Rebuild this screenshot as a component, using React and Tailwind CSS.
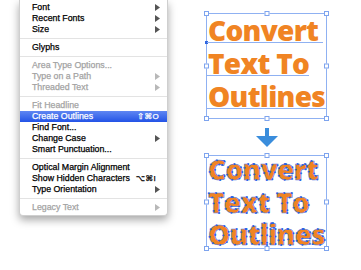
import React from 'react';

const menu = [
  { label: 'Font', arrow: true },
  { label: 'Recent Fonts', arrow: true },
  { label: 'Size', arrow: true },
  'sep',
  { label: 'Glyphs' },
  'sep',
  { label: 'Area Type Options...', off: true },
  { label: 'Type on a Path', arrow: true, off: true },
  { label: 'Threaded Text', arrow: true, off: true },
  'sep',
  { label: 'Fit Headline', off: true },
  { label: 'Create Outlines', key: '⇧⌘O', active: true },
  { label: 'Find Font...' },
  { label: 'Change Case', arrow: true },
  { label: 'Smart Punctuation...' },
  'sep',
  { label: 'Optical Margin Alignment' },
  { label: 'Show Hidden Characters', key: '⌥⌘I', keyPad: true },
  { label: 'Type Orientation', arrow: true },
  'sep',
  { label: 'Legacy Text', arrow: true, off: true },
];

const Caret = ({ off }) => (
  <svg width="5" height="7" viewBox="0 0 5 7" className="ml-auto shrink-0">
    <polygon points="0,0 5,3.5 0,7" fill={off ? '#b8b8b8' : '#555'} />
  </svg>
);

const Handles = () => {
  const spots = [
    'left-[-3px] top-[-3px]',
    'left-1/2 -translate-x-1/2 top-[-3px]',
    'right-[-3px] top-[-3px]',
    'left-[-3px] top-1/2 -translate-y-1/2',
    'right-[-3px] top-1/2 -translate-y-1/2',
    'left-[-3px] bottom-[-3px]',
    'left-1/2 -translate-x-1/2 bottom-[-3px]',
    'right-[-3px] bottom-[-3px]',
  ];
  return spots.map((s) => (
    <span key={s} className={`absolute ${s} w-[5px] h-[5px] bg-white border border-[#7ea4ee]`} />
  ));
};

const TextLine = ({ children, lineWidth }) => (
  <div className="relative h-[33px] leading-[33px] whitespace-nowrap">
    {children}
    <span
      className="absolute left-[-1px] top-[28px] h-px bg-[#8fb1f2]"
      style={{ width: lineWidth }}
    />
  </div>
);

const App = () => {
  return (
    <div className="w-[361px] h-[270px] bg-white overflow-hidden flex items-start font-['Liberation_Sans','DejaVu_Sans',sans-serif]">
      {/* Type menu */}
      <div className="ml-[19px] w-[149px] pt-[2px] pb-[2px] bg-white border-x border-b border-[#cfcfcf] rounded-b-[4px] shadow-[0_4px_9px_rgba(0,0,0,0.35)]">
        {menu.map((item, i) =>
          item === 'sep' ? (
            <div key={i} className="h-[7px] flex items-center">
              <div className="w-full h-px bg-[#e3e3e3]" />
            </div>
          ) : (
            <div
              key={i}
              className={`h-[11px] flex items-center pl-[12px] pr-[7px] text-[8.8px] leading-[11px] [-webkit-text-stroke:0.25px_currentColor] ${
                item.active
                  ? 'bg-gradient-to-b from-[#5f86f2] to-[#2352e6] text-white'
                  : item.off
                  ? 'text-[#a3a3a3]'
                  : 'text-black'
              }`}
            >
              <span className="whitespace-nowrap">{item.label}</span>
              {item.key && (
                <span
                  className={`ml-auto shrink-0 text-[8px] tracking-[0.3px] ${
                    item.keyPad ? 'pr-[4px]' : 'pr-[1px]'
                  }`}
                >
                  {item.key}
                </span>
              )}
              {item.arrow && <Caret off={item.off} />}
            </div>
          )
        )}
      </div>

      {/* Before / after artwork */}
      <div className="ml-[38px] mt-[13px] w-[121px] flex flex-col">
        <div className="relative h-[106px] border border-[#8fb1f2] pl-[1px] font-['Open_Sans',sans-serif] font-extrabold text-[28px] tracking-[-0.7px] text-[#f08423]">
          <Handles />
          <span className="absolute left-[-2px] top-[27px] w-[3px] h-[3px] bg-[#2f66e0]" />
          <TextLine lineWidth={116}>Convert</TextLine>
          <TextLine lineWidth={102}>Text To</TextLine>
          <TextLine lineWidth={120}>Outlines</TextLine>
        </div>

        <svg width="22" height="19" viewBox="0 0 22 19" className="mt-[9px] self-center">
          <rect x="9" y="0" width="4" height="8" fill="#3a8ddc" />
          <polygon points="0,8 22,8 11,19" fill="#3a8ddc" />
        </svg>

        <div className="relative h-[94px] mt-[8px] border border-[#8fb1f2]">
          <Handles />
          <svg
            width="119"
            height="92"
            className="block overflow-visible font-['Open_Sans',sans-serif] font-extrabold text-[28px] tracking-[-0.7px]"
          >
            <g fill="#f08423" stroke="#4a78e6" strokeWidth="0.6">
              <text id="ol1" x="1" y="24">Convert</text>
              <text id="ol2" x="1" y="57">Text To</text>
              <text id="ol3" x="1" y="89">Outlines</text>
            </g>
            <g fill="none" stroke="#2b62e6" strokeWidth="1.9" strokeLinecap="round" strokeDasharray="0 7.5">
              <use href="#ol1" />
              <use href="#ol2" />
              <use href="#ol3" />
            </g>
          </svg>
        </div>
      </div>
    </div>
  );
};

export default App;
